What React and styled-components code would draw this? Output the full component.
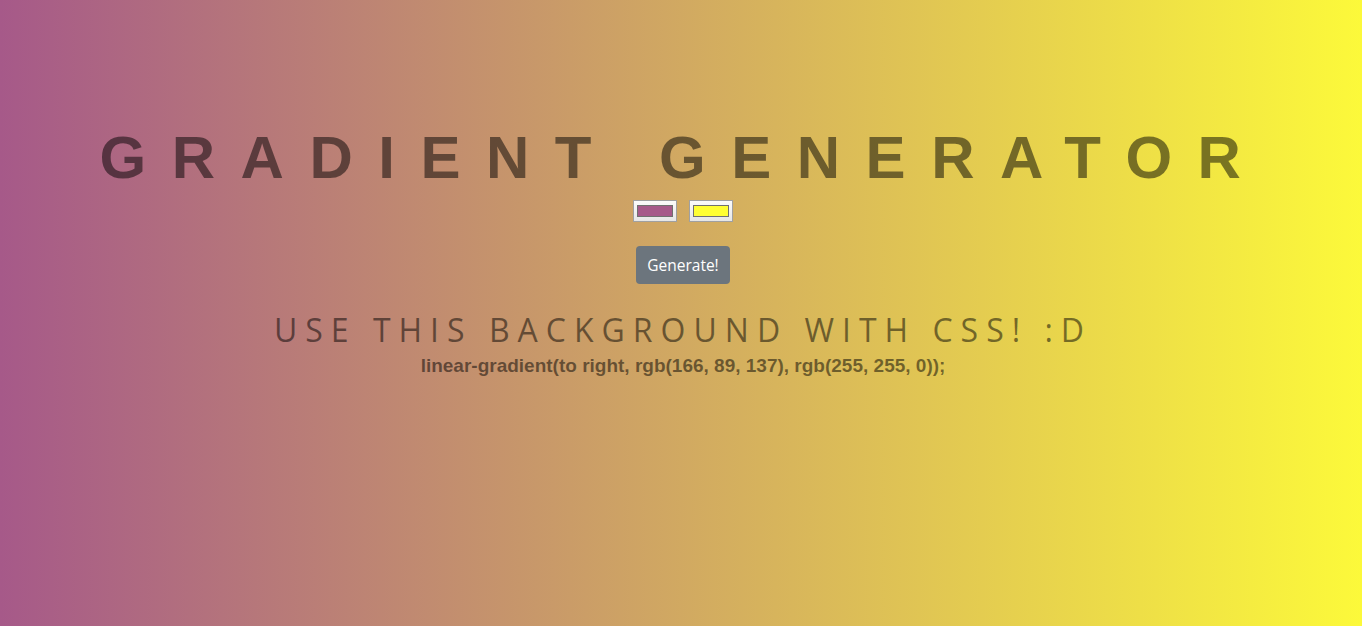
import React from "react";
import styled, { createGlobalStyle } from "styled-components";

const Global = createGlobalStyle`
  html, body { margin: 0; height: 100%; }
  body {
    background: linear-gradient(to right, rgb(166, 89, 137), rgb(252, 249, 58));
    font-family: "Liberation Sans", Arial, sans-serif;
    min-height: 626px;
  }
`;

const Page = styled.main`
  display: flex;
  flex-direction: column;
  align-items: center;
  padding: 122px 0 0 4px;
`;

const Title = styled.h1`
  margin: 0;
  font-family: "Liberation Sans", Arial, sans-serif;
  font-weight: 700;
  font-size: 60px;
  line-height: 72px;
  letter-spacing: 25.5px;
  color: rgba(0, 0, 0, 0.5);
  white-space: nowrap;
`;

const Pickers = styled.div`
  display: flex;
  gap: 12px;
  margin-top: 6px;
`;

const Picker = styled.div`
  width: 44px;
  height: 22px;
  box-sizing: border-box;
  border: 1px solid #a0a0a0;
  background: linear-gradient(#fbfbfb, #e6e6e6);
  display: flex;
  align-items: center;
  justify-content: center;
`;

const Swatch = styled.span`
  width: 34px;
  height: 10px;
  border: 1px solid #707070;
  background: ${(p) => p.color};
`;

const Button = styled.button`
  margin-top: 24px;
  width: 94px;
  height: 38px;
  border: none;
  border-radius: 4px;
  background: #6c757d;
  color: #fff;
  font-family: "Open Sans", sans-serif;
  font-size: 15.5px;
  padding: 0;
`;

const Sub = styled.h2`
  margin: 26px 0 0;
  font-family: "Open Sans", sans-serif;
  font-weight: 400;
  font-size: 32px;
  line-height: 40px;
  letter-spacing: 8px;
  color: rgba(0, 0, 0, 0.5);
  white-space: nowrap;
`;

const Code = styled.p`
  margin: 5px 0 0;
  font-family: "Liberation Sans", Arial, sans-serif;
  font-weight: 700;
  font-size: 19px;
  line-height: 22px;
  color: rgba(0, 0, 0, 0.5);
  white-space: nowrap;
`;

export default function App() {
  return (
    <>
      <Global />
      <Page>
        <Title>GRADIENT GENERATOR</Title>
        <Pickers>
          <Picker><Swatch color="#a6598a" /></Picker>
          <Picker><Swatch color="#ffff33" /></Picker>
        </Pickers>
        <Button>Generate!</Button>
        <Sub>USE THIS BACKGROUND WITH CSS! :D</Sub>
        <Code>linear-gradient(to right, rgb(166, 89, 137), rgb(255, 255, 0));</Code>
      </Page>
    </>
  );
}
